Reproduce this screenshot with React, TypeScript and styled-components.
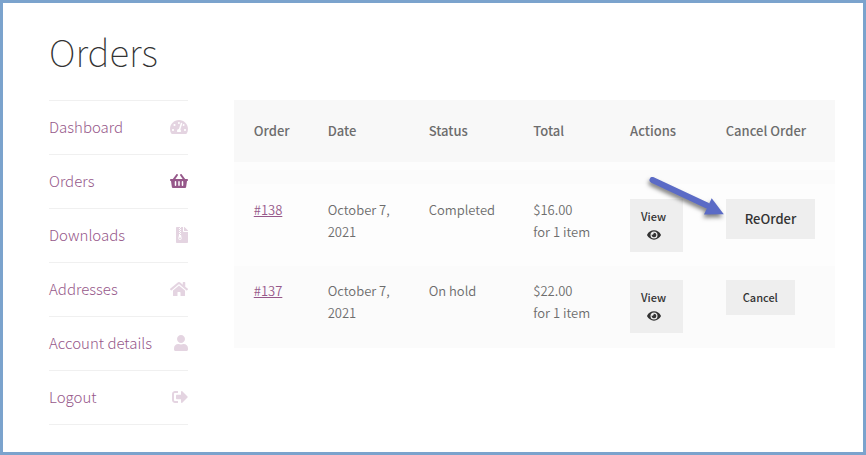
import React from "react";
import styled, { createGlobalStyle } from "styled-components";
import type { IconType } from "react-icons";
import {
  FaTachometerAlt,
  FaShoppingBasket,
  FaFileArchive,
  FaHome,
  FaUser,
  FaSignOutAlt,
  FaEye,
} from "react-icons/fa";

const GlobalStyle = createGlobalStyle`
  *, *::before, *::after { box-sizing: border-box; }
  body {
    margin: 0;
    background: #ffffff;
    color: #6d6d6d;
    font-family: "Source Sans Pro", "Noto Sans CJK SC", "Noto Sans", sans-serif;
    font-size: 13px;
    font-weight: 350;
    line-height: 22px;
  }
`;

const Page = styled.main`
  min-height: 100vh;
  padding: 24px 28px 27px 46px;
  border: 3px solid #7ba3cd;
`;

const Title = styled.h1`
  margin: 0 0 25px;
  color: #333333;
  font-size: 37px;
  font-weight: 100;
  line-height: 48px;
`;

const Columns = styled.div`
  display: grid;
  grid-template-columns: 3fr 13fr;
  column-gap: 46px;
  align-items: start;
`;

const Menu = styled.ul`
  margin: 0;
  padding: 0;
  list-style: none;
  border-top: 1px solid #f0f0f0;
`;

const MenuItem = styled.li`
  border-bottom: 1px solid #f0f0f0;
`;

const MenuLink = styled.a<{ $active?: boolean }>`
  display: flex;
  align-items: center;
  justify-content: space-between;
  height: 53px;
  padding-bottom: 2px;
  color: #96588a;
  font-size: 15px;
  font-weight: 300;
  text-decoration: none;
  white-space: nowrap;

  svg {
    flex: none;
    opacity: ${(p) => (p.$active ? 1 : 0.25)};
  }
`;

const Table = styled.table`
  width: 100%;
  table-layout: fixed;
  border-collapse: collapse;
  background: #fdfdfd;
`;

const Col = styled.col<{ $share: number }>`
  width: ${(p) => p.$share}%;
`;

const HeadCell = styled.th`
  padding: 20px 0 20px 20px;
  background: #f8f8f8;
  font-weight: 500;
  text-align: left;
  white-space: nowrap;
`;

const Spacer = styled.td<{ $tall?: boolean }>`
  height: ${(p) => (p.$tall ? 14 : 8)}px;
  padding: 0;
  background: ${(p) => (p.$tall ? "#fbfbfb" : "#fdfdfd")};
`;

const Row = styled.tr`
  height: 82px;
  background: #fdfdfd;

  &:last-child {
    background: #fbfbfb;
  }
`;

const Cell = styled.td`
  padding: 14px 12px 14px 20px;
  vertical-align: top;

  ${Row}:not(:last-child) > & {
    padding-top: 15px;
  }
`;

const OrderLink = styled.a`
  color: #96588a;
  text-decoration: underline;
`;

const ViewLink = styled.a`
  display: flex;
  flex-direction: column;
  align-items: center;
  width: 53px;
  padding: 8px 16px 9px 10px;
  background: #eeeeee;
  color: #333333;
  font-size: 11px;
  font-weight: 500;
  line-height: 18px;
  text-decoration: none;

  svg {
    margin: 3px 0 1px;
  }
`;

const ActionButton = styled.button<{ $large?: boolean }>`
  display: block;
  padding: ${(p) => (p.$large ? "9px 19px" : "7px 17px")};
  border: 0;
  background: #eeeeee;
  color: #333333;
  font-family: inherit;
  font-size: ${(p) => (p.$large ? 13 : 11)}px;
  font-weight: 500;
  line-height: ${(p) => (p.$large ? 22 : 21)}px;
  white-space: nowrap;
`;

const Callout = styled.div`
  position: relative;
  width: max-content;
`;

const Arrow = styled.svg`
  position: absolute;
  left: -85px;
  top: -29px;
  overflow: visible;
  pointer-events: none;
  filter: drop-shadow(-1px 3px 2px rgba(0, 0, 0, 0.5));
`;

const menu: { label: string; icon: IconType; size: number; active?: boolean }[] = [
  { label: "Dashboard", icon: FaTachometerAlt, size: 18 },
  { label: "Orders", icon: FaShoppingBasket, size: 18, active: true },
  { label: "Downloads", icon: FaFileArchive, size: 16 },
  { label: "Addresses", icon: FaHome, size: 18 },
  { label: "Account details", icon: FaUser, size: 16 },
  { label: "Logout", icon: FaSignOutAlt, size: 16 },
];

const columns = [
  { label: "Order", share: 12.3 },
  { label: "Date", share: 16.8 },
  { label: "Status", share: 17.4 },
  { label: "Total", share: 16.1 },
  { label: "Actions", share: 15.9 },
  { label: "Cancel Order", share: 21.5 },
];

const orders = [
  { id: "#138", date: "October 7, 2021", status: "Completed", total: "$16.00", action: "ReOrder" },
  { id: "#137", date: "October 7, 2021", status: "On hold", total: "$22.00", action: "Cancel" },
];

export default function App() {
  return (
    <>
      <GlobalStyle />
      <Page>
        <Title>Orders</Title>
        <Columns>
          <nav aria-label="Account">
            <Menu>
              {menu.map(({ label, icon: Icon, size, active }) => (
                <MenuItem key={label}>
                  <MenuLink href="#" $active={active} aria-current={active ? "page" : undefined}>
                    {label}
                    <Icon size={size} preserveAspectRatio="xMaxYMid meet" aria-hidden />
                  </MenuLink>
                </MenuItem>
              ))}
            </Menu>
          </nav>
          <Table>
            <colgroup>
              {columns.map((c) => (
                <Col key={c.label} $share={c.share} />
              ))}
            </colgroup>
            <thead>
              <tr>
                {columns.map((c) => (
                  <HeadCell key={c.label} scope="col">
                    {c.label}
                  </HeadCell>
                ))}
              </tr>
            </thead>
            <tbody>
              <tr>
                <Spacer colSpan={6} />
              </tr>
              <tr>
                <Spacer colSpan={6} $tall />
              </tr>
              {orders.map((o) => (
                <Row key={o.id}>
                  <Cell>
                    <OrderLink href="#">{o.id}</OrderLink>
                  </Cell>
                  <Cell>{o.date}</Cell>
                  <Cell>{o.status}</Cell>
                  <Cell>
                    {o.total}
                    <br />
                    for 1 item
                  </Cell>
                  <Cell>
                    <ViewLink href="#">
                      View
                      <FaEye size={14} aria-hidden />
                    </ViewLink>
                  </Cell>
                  <Cell>
                    {o.action === "ReOrder" ? (
                      <Callout>
                        <ActionButton type="button" $large>
                          {o.action}
                        </ActionButton>
                        <Arrow width="90" height="55" viewBox="0 0 90 55" aria-hidden>
                          <path d="M11.5 10 L66 35.5" stroke="#5b6bc6" strokeWidth="6" strokeLinecap="round" />
                          <path d="M70.7 28.3 L82.8 44.2 L63 44.4 Z" fill="#5b6bc6" />
                        </Arrow>
                      </Callout>
                    ) : (
                      <ActionButton type="button">{o.action}</ActionButton>
                    )}
                  </Cell>
                </Row>
              ))}
            </tbody>
          </Table>
        </Columns>
      </Page>
    </>
  );
}
